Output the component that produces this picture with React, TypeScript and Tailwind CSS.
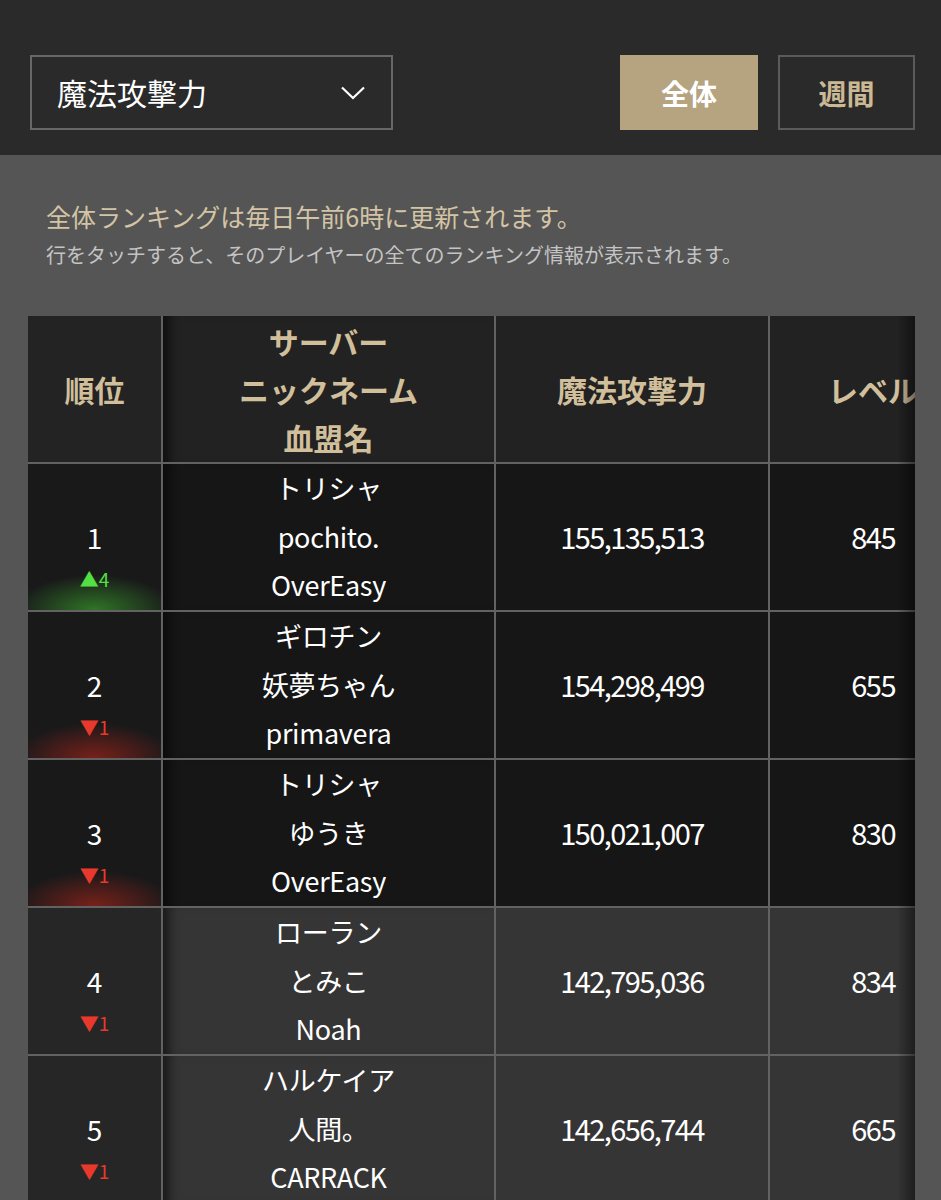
type Row = {
  rank: number;
  dir: "up" | "down";
  diff: number;
  lines: string[];
  power: string;
  level: string;
};

const rows: Row[] = [
  { rank: 1, dir: "up", diff: 4, lines: ["トリシャ", "pochito.", "OverEasy"], power: "155,135,513", level: "845" },
  { rank: 2, dir: "down", diff: 1, lines: ["ギロチン", "妖夢ちゃん", "primavera"], power: "154,298,499", level: "655" },
  { rank: 3, dir: "down", diff: 1, lines: ["トリシャ", "ゆうき", "OverEasy"], power: "150,021,007", level: "830" },
  { rank: 4, dir: "down", diff: 1, lines: ["ローラン", "とみこ", "Noah"], power: "142,795,036", level: "834" },
  { rank: 5, dir: "down", diff: 1, lines: ["ハルケイア", "人間。", "CARRACK"], power: "142,656,744", level: "665" },
];

function RankCell({ row }: { row: Row }) {
  const top = row.rank <= 3;
  const glow = !top
    ? "bg-[#262626]"
    : row.dir === "up"
      ? "bg-[#19191a] bg-[radial-gradient(ellipse_60%_24%_at_50%_100%,rgba(70,210,50,0.5),rgba(70,210,50,0)_100%)]"
      : "bg-[#19191a] bg-[radial-gradient(ellipse_60%_24%_at_50%_100%,rgba(215,40,25,0.5),rgba(215,40,25,0)_100%)]";
  return (
    <div className={`flex h-[146px] flex-col items-center justify-center ${glow}`}>
      <div className="h-[36px]" />
      <div className="text-[28px] leading-[48px] text-white">{row.rank}</div>
      <div
        className={`h-[36px] text-[19px] leading-[36px] ${row.dir === "up" ? "text-[#52e042]" : "text-[#e8392c]"}`}
      >
        {row.dir === "up" ? "▲" : "▼"}
        {row.diff}
      </div>
    </div>
  );
}

export default function App() {
  return (
    <div className="min-h-[1200px] bg-[#555555] font-['Noto_Sans_CJK_JP',sans-serif]">
      {/* 上部：種別選択 */}
      <div className="flex h-[155px] items-start bg-[#2a2a2a] pl-[30px] pr-[26px] pt-[55px]">
        <div className="flex h-[75px] w-[363px] items-center justify-between border-2 border-[#676767] pl-[25px] pr-[26px]">
          <span className="text-[30px] text-white">魔法攻撃力</span>
          <svg width="24" height="14" viewBox="0 0 24 14" fill="none" stroke="white" strokeWidth="2.2">
            <polyline points="1,1.5 12,12 23,1.5" />
          </svg>
        </div>
        <div className="ml-auto flex gap-[20px]">
          <button className="flex h-[75px] w-[138px] items-center justify-center bg-[#b6a37f] text-[28px] font-bold text-white">
            全体
          </button>
          <button className="flex h-[75px] w-[137px] items-center justify-center border-2 border-[#5b5b5b] text-[28px] font-bold text-[#cbb894]">
            週間
          </button>
        </div>
      </div>

      {/* 説明文 */}
      <div className="px-[46px] pt-[44px]">
        <p className="text-[25px] leading-[34px] text-[#d3c4a5]">全体ランキングは毎日午前6時に更新されます。</p>
        <p className="mt-[8px] text-[20px] leading-[28px] text-[#c4c4c4]">
          行をタッチすると、そのプレイヤーの全てのランキング情報が表示されます。
        </p>
      </div>

      {/* ランキング表（横スクロール） */}
      <div className="relative ml-[28px] mt-[47px] w-[887px] overflow-hidden">
        <div className="grid w-max grid-cols-[133px_331px_272px_206px] gap-[2px] bg-[#626262] text-center">
          <div className="flex h-[146px] items-center justify-center bg-[#232323] text-[30px] font-bold text-[#d1bf9c]">
            順位
          </div>
          <div className="flex h-[146px] flex-col items-center justify-center bg-[#222222] text-[30px] font-bold leading-[48px] text-[#d1bf9c] shadow-[inset_14px_0_12px_-8px_rgba(0,0,0,0.6)]">
            <span>サーバー</span>
            <span>ニックネーム</span>
            <span>血盟名</span>
          </div>
          <div className="flex h-[146px] items-center justify-center bg-[#222222] text-[30px] font-bold text-[#d1bf9c]">
            魔法攻撃力
          </div>
          <div className="flex h-[146px] items-center justify-center bg-[#222222] text-[30px] font-bold text-[#d1bf9c]">
            レベル
          </div>

          {rows.map((row) => {
            const bg = row.rank <= 3 ? "bg-[#161616]" : "bg-[#353535]";
            return [
              <RankCell key={`r${row.rank}`} row={row} />,
              <div
                key={`n${row.rank}`}
                className={`flex h-[146px] flex-col items-center justify-center text-[27px] leading-[48.5px] tracking-[-0.3px] text-white shadow-[inset_14px_0_12px_-8px_rgba(0,0,0,0.55)] ${bg}`}
              >
                {row.lines.map((l, i) => (
                  <span key={i}>{l}</span>
                ))}
              </div>,
              <div
                key={`p${row.rank}`}
                className={`flex h-[146px] items-center justify-center text-[29px] tracking-[-1.6px] text-white ${bg}`}
              >
                {row.power}
              </div>,
              <div
                key={`l${row.rank}`}
                className={`flex h-[146px] items-center justify-end pr-[81px] text-[29px] tracking-[-1.5px] text-white ${bg}`}
              >
                {row.level}
              </div>,
            ];
          })}
        </div>
        {/* 右端のスクロール影 */}
        <div className="pointer-events-none absolute right-0 top-0 h-full w-[18px] bg-gradient-to-l from-black/45 to-transparent" />
      </div>
    </div>
  );
}
